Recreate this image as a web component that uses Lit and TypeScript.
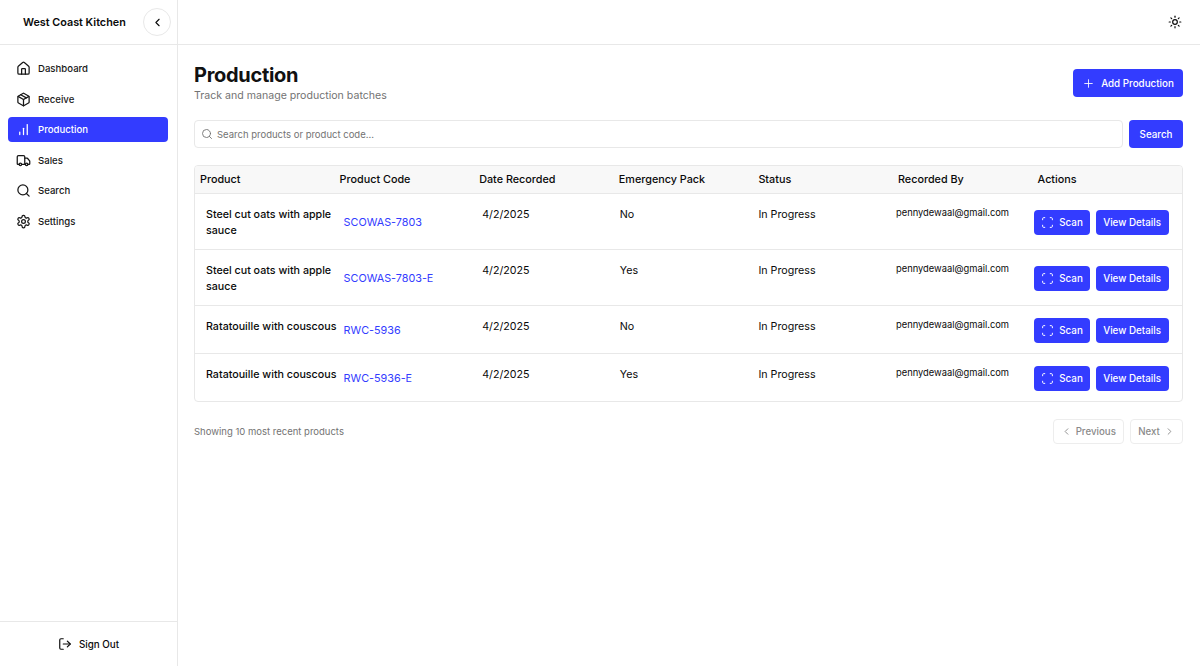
import { LitElement, css, html, svg } from 'lit';
import { customElement } from 'lit/decorators.js';

const icon = (body: unknown, size = 14, width = 2) => html`<svg
  width=${size}
  height=${size}
  viewBox="0 0 24 24"
  fill="none"
  stroke="currentColor"
  stroke-width=${width}
  stroke-linecap="round"
  stroke-linejoin="round"
>${body}</svg>`;

const icons = {
  home: svg`<path d="M15 21v-8a1 1 0 0 0-1-1h-4a1 1 0 0 0-1 1v8"/><path d="M3 10a2 2 0 0 1 .709-1.528l7-5.999a2 2 0 0 1 2.582 0l7 5.999A2 2 0 0 1 21 10v9a2 2 0 0 1-2 2H5a2 2 0 0 1-2-2z"/>`,
  box: svg`<path d="M21 8a2 2 0 0 0-1-1.73l-7-4a2 2 0 0 0-2 0l-7 4A2 2 0 0 0 3 8v8a2 2 0 0 0 1 1.73l7 4a2 2 0 0 0 2 0l7-4A2 2 0 0 0 21 16Z"/><path d="m3.3 7 8.7 5 8.7-5"/><path d="M12 22V12"/><path d="m7.5 4.27 9 5.15"/>`,
  chart: svg`<line x1="18" x2="18" y1="20" y2="4"/><line x1="12" x2="12" y1="20" y2="10"/><line x1="6" x2="6" y1="20" y2="16"/>`,
  truck: svg`<path d="M14 18V6a2 2 0 0 0-2-2H4a2 2 0 0 0-2 2v11a1 1 0 0 0 1 1h2"/><path d="M15 18H9"/><path d="M19 18h2a1 1 0 0 0 1-1v-3.65a1 1 0 0 0-.22-.624l-3.48-4.35A1 1 0 0 0 17.52 8H14"/><circle cx="17" cy="18" r="2"/><circle cx="7" cy="18" r="2"/>`,
  search: svg`<circle cx="11" cy="11" r="8"/><path d="m21 21-4.3-4.3"/>`,
  gear: svg`<path d="M12.22 2h-.44a2 2 0 0 0-2 2v.18a2 2 0 0 1-1 1.73l-.43.25a2 2 0 0 1-2 0l-.15-.08a2 2 0 0 0-2.73.73l-.22.38a2 2 0 0 0 .73 2.73l.15.1a2 2 0 0 1 1 1.72v.51a2 2 0 0 1-1 1.74l-.15.09a2 2 0 0 0-.73 2.73l.22.38a2 2 0 0 0 2.73.73l.15-.08a2 2 0 0 1 2 0l.43.25a2 2 0 0 1 1 1.73V20a2 2 0 0 0 2 2h.44a2 2 0 0 0 2-2v-.18a2 2 0 0 1 1-1.73l.43-.25a2 2 0 0 1 2 0l.15.08a2 2 0 0 0 2.73-.73l.22-.39a2 2 0 0 0-.73-2.73l-.15-.08a2 2 0 0 1-1-1.74v-.5a2 2 0 0 1 1-1.74l.15-.09a2 2 0 0 0 .73-2.73l-.22-.38a2 2 0 0 0-2.73-.73l-.15.08a2 2 0 0 1-2 0l-.43-.25a2 2 0 0 1-1-1.73V4a2 2 0 0 0-2-2z"/><circle cx="12" cy="12" r="3"/>`,
  logout: svg`<path d="M9 21H5a2 2 0 0 1-2-2V5a2 2 0 0 1 2-2h4"/><polyline points="16 17 21 12 16 7"/><line x1="21" x2="9" y1="12" y2="12"/>`,
  left: svg`<path d="m15 18-6-6 6-6"/>`,
  right: svg`<path d="m9 18 6-6-6-6"/>`,
  plus: svg`<path d="M5 12h14"/><path d="M12 5v14"/>`,
  scan: svg`<path d="M3 7V5a2 2 0 0 1 2-2h2"/><path d="M17 3h2a2 2 0 0 1 2 2v2"/><path d="M21 17v2a2 2 0 0 1-2 2h-2"/><path d="M7 21H5a2 2 0 0 1-2-2v-2"/>`,
  sun: svg`<circle cx="12" cy="12" r="4"/><path d="M12 2v2"/><path d="M12 20v2"/><path d="m4.93 4.93 1.41 1.41"/><path d="m17.66 17.66 1.41 1.41"/><path d="M2 12h2"/><path d="M20 12h2"/><path d="m6.34 17.66-1.41 1.41"/><path d="m19.07 4.93-1.41 1.41"/>`,
};

const nav = [
  { label: 'Dashboard', icon: icons.home },
  { label: 'Receive', icon: icons.box },
  { label: 'Production', icon: icons.chart, active: true },
  { label: 'Sales', icon: icons.truck },
  { label: 'Search', icon: icons.search },
  { label: 'Settings', icon: icons.gear },
];

const rows = [
  { product: 'Steel cut oats with apple sauce', code: 'SCOWAS-7803', pack: 'No' },
  { product: 'Steel cut oats with apple sauce', code: 'SCOWAS-7803-E', pack: 'Yes' },
  { product: 'Ratatouille with couscous', code: 'RWC-5936', pack: 'No' },
  { product: 'Ratatouille with couscous', code: 'RWC-5936-E', pack: 'Yes' },
];

const headers = ['Product', 'Product Code', 'Date Recorded', 'Emergency Pack', 'Status', 'Recorded By', 'Actions'];

@customElement('app-root')
export class AppRoot extends LitElement {
  static styles = css`
    :host {
      display: flex;
      height: 666px;
      overflow: hidden;
      background: #fff;
      color: #0a0a0a;
      font-family: Inter, 'Liberation Sans', sans-serif;
      font-size: 12px;
    }

    button {
      font: inherit;
      border: none;
      cursor: pointer;
    }

    svg {
      display: block;
      flex: none;
    }

    .sidebar {
      width: 177px;
      flex: none;
      display: flex;
      flex-direction: column;
      border-right: 1px solid #e8e8e8;
    }

    .brand {
      height: 44px;
      flex: none;
      display: flex;
      align-items: center;
      justify-content: space-between;
      padding: 0 6px 0 23px;
      border-bottom: 1px solid #e8e8e8;
      font-size: 10.8px;
      font-weight: 600;
    }

    .collapse {
      width: 28px;
      height: 28px;
      padding: 0;
      display: grid;
      place-items: center;
      background: #fff;
      border: 1px solid #e8e8e8;
      border-radius: 50%;
      color: #0a0a0a;
    }

    .nav {
      flex: 1;
      display: flex;
      flex-direction: column;
      gap: 5.5px;
      padding: 11.3px 9px 11px 8px;
    }

    .nav-item {
      height: 25px;
      display: flex;
      align-items: center;
      gap: 7.5px;
      padding: 0 7.5px;
      border-radius: 4px;
      font-size: 9.6px;
      font-weight: 500;
      color: #171717;
    }

    .nav-item.active {
      background: #333cff;
      color: #fff;
    }

    .signout {
      height: 44px;
      flex: none;
      display: flex;
      align-items: center;
      justify-content: center;
      gap: 7px;
      border-top: 1px solid #e8e8e8;
      font-size: 9.8px;
      font-weight: 500;
    }

    .main {
      flex: 1;
      min-width: 0;
      display: flex;
      flex-direction: column;
    }

    .topbar {
      height: 44px;
      flex: none;
      display: flex;
      align-items: center;
      justify-content: flex-end;
      padding: 0 18px;
      border-bottom: 1px solid #e8e8e8;
    }

    .content {
      padding: 18px 17px 0 16px;
    }

    .heading {
      display: flex;
      align-items: flex-start;
      justify-content: space-between;
    }

    h1 {
      margin: 0 0 1px;
      font-size: 20px;
      line-height: 24px;
      font-weight: 700;
      letter-spacing: -0.3px;
      color: #111;
    }

    .subtitle {
      margin: 0;
      font-size: 10.6px;
      line-height: 16px;
      color: #737373;
    }

    .btn {
      display: inline-flex;
      align-items: center;
      justify-content: center;
      border-radius: 4px;
      background: #333cff;
      color: #fff;
      font-size: 9.8px;
      font-weight: 500;
      white-space: nowrap;
    }

    .add {
      width: 110px;
      height: 28px;
      margin-top: 6px;
      gap: 6px;
    }

    .searchbar {
      display: flex;
      gap: 6px;
      margin-top: 16px;
    }

    .field {
      flex: 1;
      height: 28px;
      box-sizing: border-box;
      display: flex;
      align-items: center;
      gap: 4px;
      padding: 0 6px;
      border: 1px solid #e8e8e8;
      border-radius: 4px;
      font-size: 9.5px;
      color: #737373;
    }

    .search-btn {
      width: 54px;
      height: 28px;
    }

    .table {
      margin-top: 17px;
      border: 1px solid #e8e8e8;
      border-radius: 4px;
      overflow: hidden;
    }

    .row {
      display: grid;
      grid-template-columns: repeat(6, 139.6px) 1fr;
      min-height: 47px;
      border-top: 1px solid #e8e8e8;
    }

    .row.head {
      min-height: 27px;
      height: 27px;
      border-top: none;
      align-items: center;
      background: #f8f8f8;
      font-size: 10.8px;
      font-weight: 500;
    }

    .head span {
      padding-left: 5px;
    }

    .cell {
      padding: 12.5px 8px 9.5px;
      font-size: 10.7px;
      line-height: 16.5px;
    }

    .product {
      padding-left: 11px;
      padding-right: 0;
      font-weight: 500;
    }

    .product span {
      display: block;
      width: 134px;
    }

    .code {
      align-self: center;
      padding: 3px 0 0 9px;
      font-size: 10.8px;
      color: #333cff;
    }

    .date {
      padding-left: 8px;
    }

    .pack {
      padding-left: 6px;
    }

    .status {
      padding-left: 5px;
    }

    .email {
      padding: 11px 0 0 3px;
      font-size: 9.35px;
      line-height: 15px;
    }

    .actions {
      display: flex;
      align-self: center;
      gap: 5.5px;
      margin-left: 1.5px;
      padding-top: 1px;
    }

    .scan,
    .details {
      height: 25px;
    }

    .scan {
      width: 56px;
      gap: 5px;
    }

    .details {
      width: 73px;
    }

    .footer {
      display: flex;
      align-items: center;
      justify-content: space-between;
      margin-top: 17px;
      font-size: 9.5px;
      color: #737373;
    }

    .pager {
      display: flex;
      gap: 6px;
    }

    .page-btn {
      height: 25px;
      box-sizing: border-box;
      display: inline-flex;
      align-items: center;
      justify-content: center;
      gap: 4px;
      background: #fff;
      border: 1px solid #ededed;
      border-radius: 4px;
      color: #8a8a8a;
      font-size: 9.7px;
      font-weight: 500;
    }

    .prev {
      width: 71.5px;
    }

    .next {
      width: 53px;
    }
  `;

  render() {
    return html`
      <aside class="sidebar">
        <div class="brand">
          <span>West Coast Kitchen</span>
          <button class="collapse">${icon(icons.left, 13)}</button>
        </div>
        <nav class="nav">
          ${nav.map(
            (item) => html`
              <div class="nav-item ${item.active ? 'active' : ''}">
                ${icon(item.icon, 15, 2)}
                <span>${item.label}</span>
              </div>
            `
          )}
        </nav>
        <div class="signout">${icon(icons.logout, 14, 2)}<span>Sign Out</span></div>
      </aside>
      <div class="main">
        <header class="topbar">${icon(icons.sun, 14, 2)}</header>
        <main class="content">
          <div class="heading">
            <div>
              <h1>Production</h1>
              <p class="subtitle">Track and manage production batches</p>
            </div>
            <button class="btn add">${icon(icons.plus, 13, 1.6)}<span>Add Production</span></button>
          </div>
          <div class="searchbar">
            <div class="field">${icon(icons.search, 12, 1.8)}<span>Search products or product code...</span></div>
            <button class="btn search-btn">Search</button>
          </div>
          <div class="table">
            <div class="row head">${headers.map((h) => html`<span>${h}</span>`)}</div>
            ${rows.map(
              (row) => html`
                <div class="row">
                  <div class="cell product"><span>${row.product}</span></div>
                  <div class="cell code">${row.code}</div>
                  <div class="cell date">4/2/2025</div>
                  <div class="cell pack">${row.pack}</div>
                  <div class="cell status">In Progress</div>
                  <div class="cell email">pennydewaal@gmail.com</div>
                  <div class="actions">
                    <button class="btn scan">${icon(icons.scan, 13, 1.8)}<span>Scan</span></button>
                    <button class="btn details">View Details</button>
                  </div>
                </div>
              `
            )}
          </div>
          <div class="footer">
            <span>Showing 10 most recent products</span>
            <div class="pager">
              <button class="page-btn prev">${icon(icons.left, 11)}<span>Previous</span></button>
              <button class="page-btn next"><span>Next</span>${icon(icons.right, 11)}</button>
            </div>
          </div>
        </main>
      </div>
    `;
  }
}
